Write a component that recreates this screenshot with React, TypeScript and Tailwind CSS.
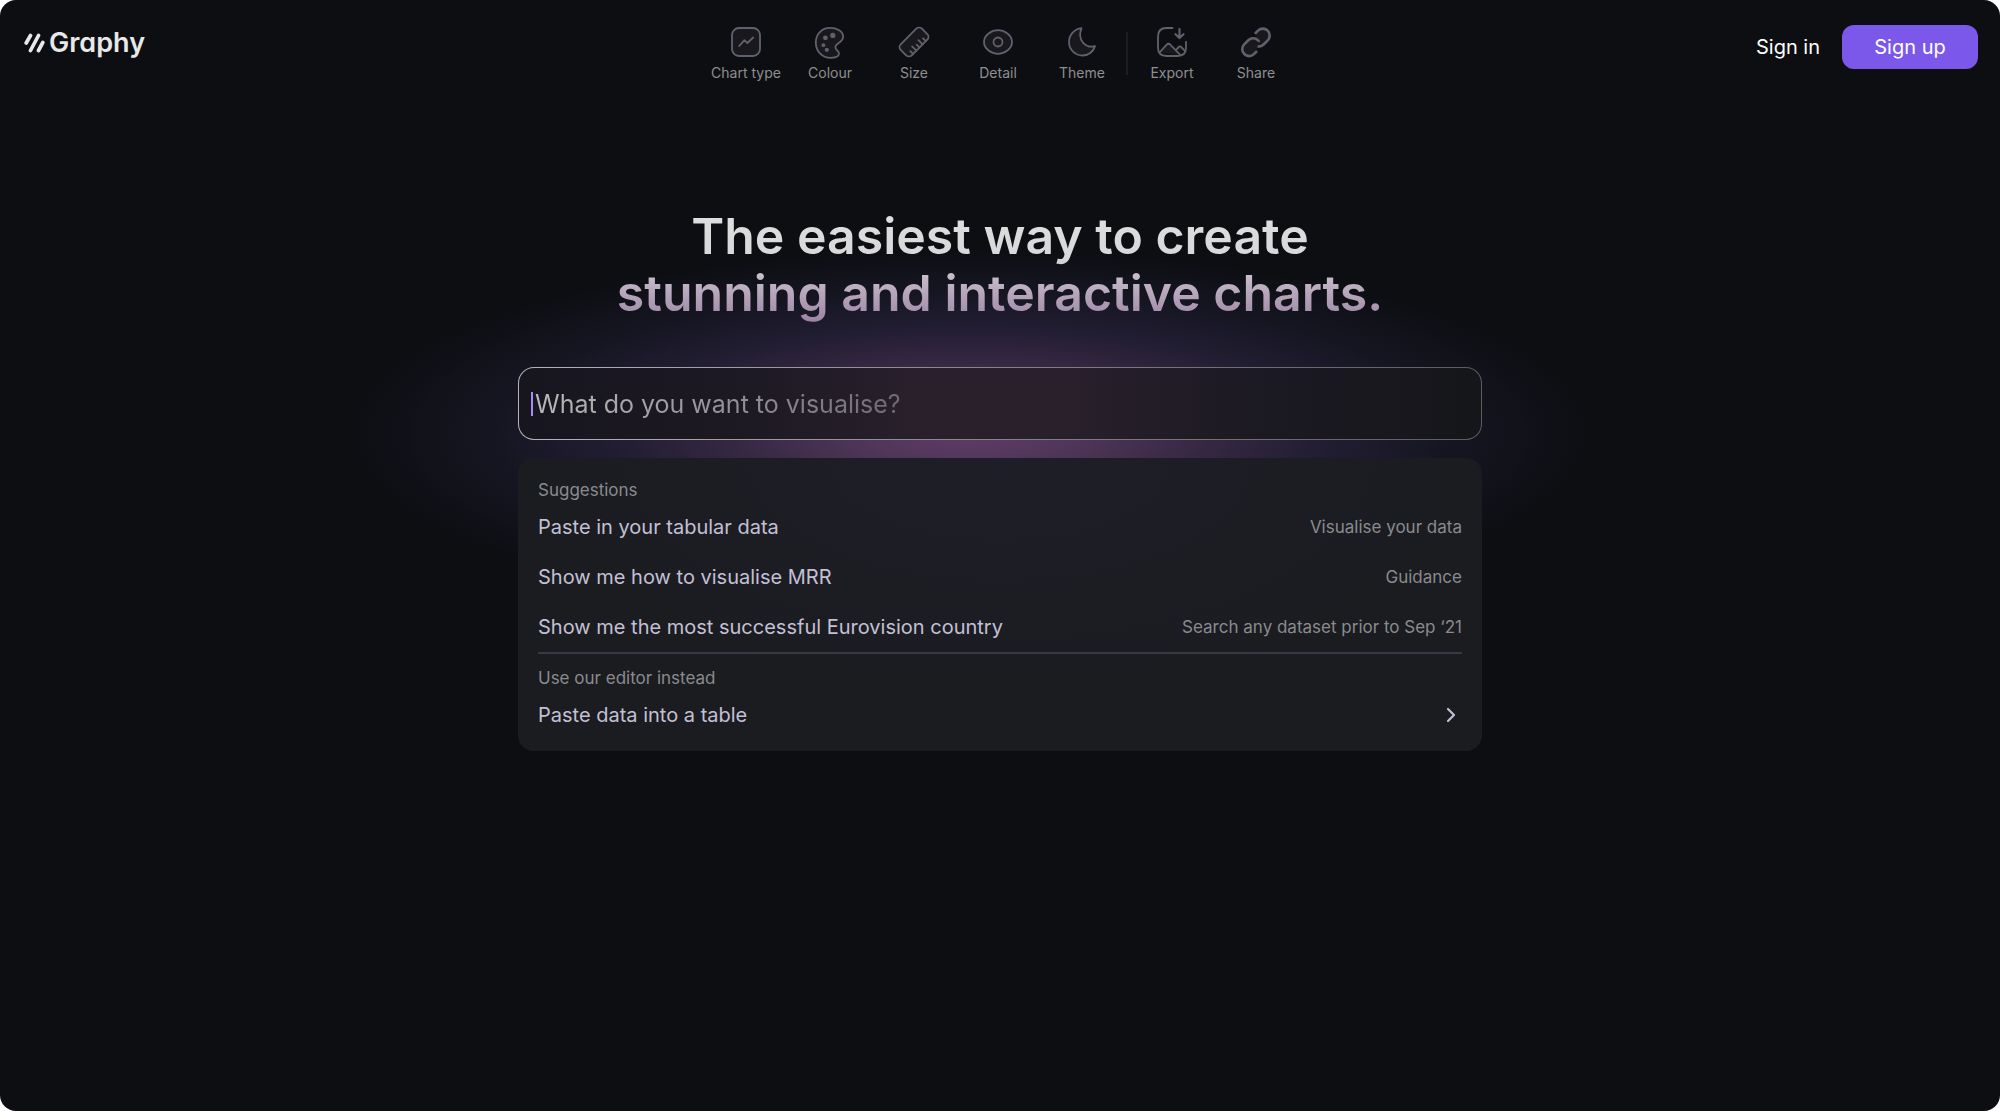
import type { ReactNode } from "react";

type Tool = { label: string; icon: ReactNode };

const editTools: Tool[] = [
  {
    label: "Chart type",
    icon: (
      <>
        <rect x="1" y="1" width="28" height="28" rx="7" />
        <path d="M8.2 19 L13.4 13.2 L16.4 16 L22.2 10.5" />
      </>
    ),
  },
  {
    label: "Colour",
    icon: (
      <>
        <path d="M15 .9C6.8.9.8 7.2.8 15.5.8 24 6.8 30.8 15.8 30.8c4.4 0 8.2-1.2 8.2-4.2 0-3-3.6-3.2-3.6-6.6 0-4.2 7.8-4.2 7.8-10.2C28.2 4.2 22 .9 15 .9Z" />
        <g fill="currentColor" stroke="none">
          <circle cx="10.4" cy="10.8" r="2.4" />
          <circle cx="17.8" cy="8.4" r="2.6" />
          <circle cx="8.4" cy="18.2" r="1.9" />
          <circle cx="11.8" cy="22.8" r="2.1" />
        </g>
      </>
    ),
  },
  {
    label: "Size",
    icon: (
      <g transform="rotate(-45 15 15)">
        <rect x="0" y="7.2" width="30" height="15.6" rx="4" />
        <path d="M6 22.8v-4M10.5 22.8v-6M15 22.8v-4M19.5 22.8v-6M24 22.8v-4" />
      </g>
    ),
  },
  {
    label: "Detail",
    icon: (
      <>
        <path d="M15 3.2c6.5 0 14 4.8 14 11.8s-7.5 11.8-14 11.8S1 22 1 15 8.5 3.2 15 3.2Z" />
        <circle cx="15" cy="15" r="4.5" />
      </>
    ),
  },
  {
    label: "Theme",
    icon: <path d="M14.5 1.2C7.5 2 2 7.8 2 15c0 7.7 6.2 13.5 13.5 13.5 5.8 0 10.8-3.8 12.5-9.3C19.5 21.5 9.5 14 14.5 1.2Z" />,
  },
];

const shareTools: Tool[] = [
  {
    label: "Export",
    icon: (
      <>
        <path fill="none" d="M15.5 1H9.5C4 1 1 4 1 9.5v11C1 26 4 29 9.5 29h11c5.5 0 8.5-3 8.5-8.5V15" />
        <path d="M2.5 25.5l7-7.7c1.3-1.4 2.8-1.4 4 0L23.5 28.2" />
        <path d="M19 23l2.3-2.7c1-1.2 2.3-1.2 3.3 0L28 24" />
        <path fill="none" strokeWidth="2.2" d="M22.5 2v8.5M18.5 7.2l4 3.8 4-3.8" />
      </>
    ),
  },
  {
    label: "Share",
    icon: (
      <g transform="translate(-1.6 -1.2) scale(1.38)" strokeWidth="1.9">
        <path d="M10 13a5 5 0 0 0 7.54.54l3-3a5 5 0 0 0-7.07-7.07l-1.72 1.71" />
        <path d="M14 11a5 5 0 0 0-7.54-.54l-3 3a5 5 0 0 0 7.07 7.07l1.71-1.71" />
      </g>
    ),
  },
];

const suggestions = [
  { title: "Paste in your tabular data", hint: "Visualise your data" },
  { title: "Show me how to visualise MRR", hint: "Guidance" },
  { title: "Show me the most successful Eurovision country", hint: "Search any dataset prior to Sep ‘21" },
];

function ToolButton({ label, icon }: Tool) {
  return (
    <button type="button" className="flex w-[84px] flex-col items-center gap-1 text-[#8e8f91]">
      <svg
        viewBox="-1 -1 32 33"
        className="h-[33px] w-8 text-[#62606d]"
        fill="#18181d"
        stroke="currentColor"
        strokeWidth="1.8"
        strokeLinecap="round"
        strokeLinejoin="round"
        aria-hidden="true"
      >
        {icon}
      </svg>
      <span className="text-sm leading-5 whitespace-nowrap">{label}</span>
    </button>
  );
}

function Header() {
  return (
    <header className="grid grid-cols-[1fr_auto_1fr] items-start pr-[22px] pl-6">
      <a href="#" className="mt-[27px] flex items-center gap-1 justify-self-start text-[#e8e8e8]">
        <svg viewBox="0 0 21 20" className="h-5 w-[21px]" stroke="currentColor" strokeWidth="3.7" strokeLinecap="round" aria-hidden="true">
          <path d="M2.2 10L6.5 2.5M6.5 17.5L14.5 2.5M14.5 17.5L18.8 9.5" />
        </svg>
        <span className="text-[27px] leading-8 font-semibold [font-feature-settings:'cv11']">Graphy</span>
      </a>

      <nav aria-label="Chart tools" className="flex pt-[26px]">
        {editTools.map((tool) => (
          <ToolButton key={tool.label} {...tool} />
        ))}
        <div className="mx-0.5 mt-1.5 h-[43px] w-0.5 bg-[#1c1d21]" />
        {shareTools.map((tool) => (
          <ToolButton key={tool.label} {...tool} />
        ))}
      </nav>

      <div className="mt-[25px] flex items-center justify-self-end">
        <a href="#" className="px-[22px] text-xl leading-6 text-white">Sign in</a>
        <a href="#" className="flex h-11 w-[136px] items-center justify-center rounded-xl bg-[#7b57ea] text-xl leading-6 text-white">
          Sign up
        </a>
      </div>
    </header>
  );
}

function SuggestionPanel() {
  return (
    <div className="mt-[18px] rounded-2xl bg-[radial-gradient(ellipse_50%_80%_at_50%_0%,#1e1e28,#1b1c20)] px-5 pt-5 pb-[11px]">
      <h2 className="text-[17px] leading-6 text-[#8a8b8e]">Suggestions</h2>
      <ul>
        {suggestions.map(({ title, hint }) => (
          <li key={title}>
            <button type="button" className="flex h-[50px] w-full items-center justify-between">
              <span className="text-xl leading-6 text-[#c3c0d6]">{title}</span>
              <span className="text-[17px] leading-6 text-[#8a8b8e]">{hint}</span>
            </button>
          </li>
        ))}
      </ul>
      <hr className="border-t-2 border-[#373a42]" />
      <h2 className="mt-3 text-[17px] leading-6 text-[#8a8b8e]">Use our editor instead</h2>
      <button type="button" className="flex h-[50px] w-full items-center justify-between text-[#c3c0d6]">
        <span className="text-xl leading-6">Paste data into a table</span>
        <svg viewBox="0 0 24 24" className="size-6" fill="none" stroke="currentColor" strokeWidth="2.2" strokeLinecap="round" strokeLinejoin="round" aria-hidden="true">
          <path d="M10 6l6 6-6 6" />
        </svg>
      </button>
    </div>
  );
}

export default function App() {
  return (
    <div className="bg-white font-[Inter,sans-serif]">
      <div className="relative min-h-screen overflow-hidden rounded-2xl bg-[#0d0e12]">
        {/* glow behind the prompt */}
        <div className="absolute top-[249px] left-1/2 h-[368px] w-[1240px] -translate-x-[650px] bg-[radial-gradient(closest-side,#5f3c68_0%,#4f3658_18%,#362843_38%,#231e33_56%,#161623_76%,#0d0e1200_100%)]" />

        <div className="relative">
          <Header />

          <main className="mx-auto mt-[125px] w-full max-w-[964px]">
            <h1 className="bg-[linear-gradient(180deg,#e0e0e0_0%,#d8d7d9_42%,#c4b8c8_60%,#977fa0_100%)] bg-clip-text pb-1 text-center text-[50px] leading-[57px] font-semibold text-transparent">
              The easiest way to create
              <br />
              stunning and interactive charts.
            </h1>

            <div className="mt-[41px] rounded-2xl bg-linear-to-r from-[#b5b4b9] via-[#858188] to-[#5c5c5f] p-px">
              <label className="flex h-[71px] items-center rounded-[15px] bg-[linear-gradient(90deg,#17151d_0%,#1c1923_22%,#29202c_42%,#29202c_56%,#1b1922_78%,#15161a_100%)] px-3">
                <span className="h-6 w-0.5 shrink-0 bg-[#a78bfa]" />
                <input
                  type="text"
                  aria-label="What do you want to visualise?"
                  placeholder="What do you want to visualise?"
                  className="ml-0.5 w-full text-[25px] leading-8 outline-none placeholder:bg-[linear-gradient(90deg,#b9b8b8_0px,#8d8991_230px,#6a6570_380px)] placeholder:bg-clip-text placeholder:text-transparent"
                />
              </label>
            </div>

            <SuggestionPanel />
          </main>
        </div>
      </div>
    </div>
  );
}
